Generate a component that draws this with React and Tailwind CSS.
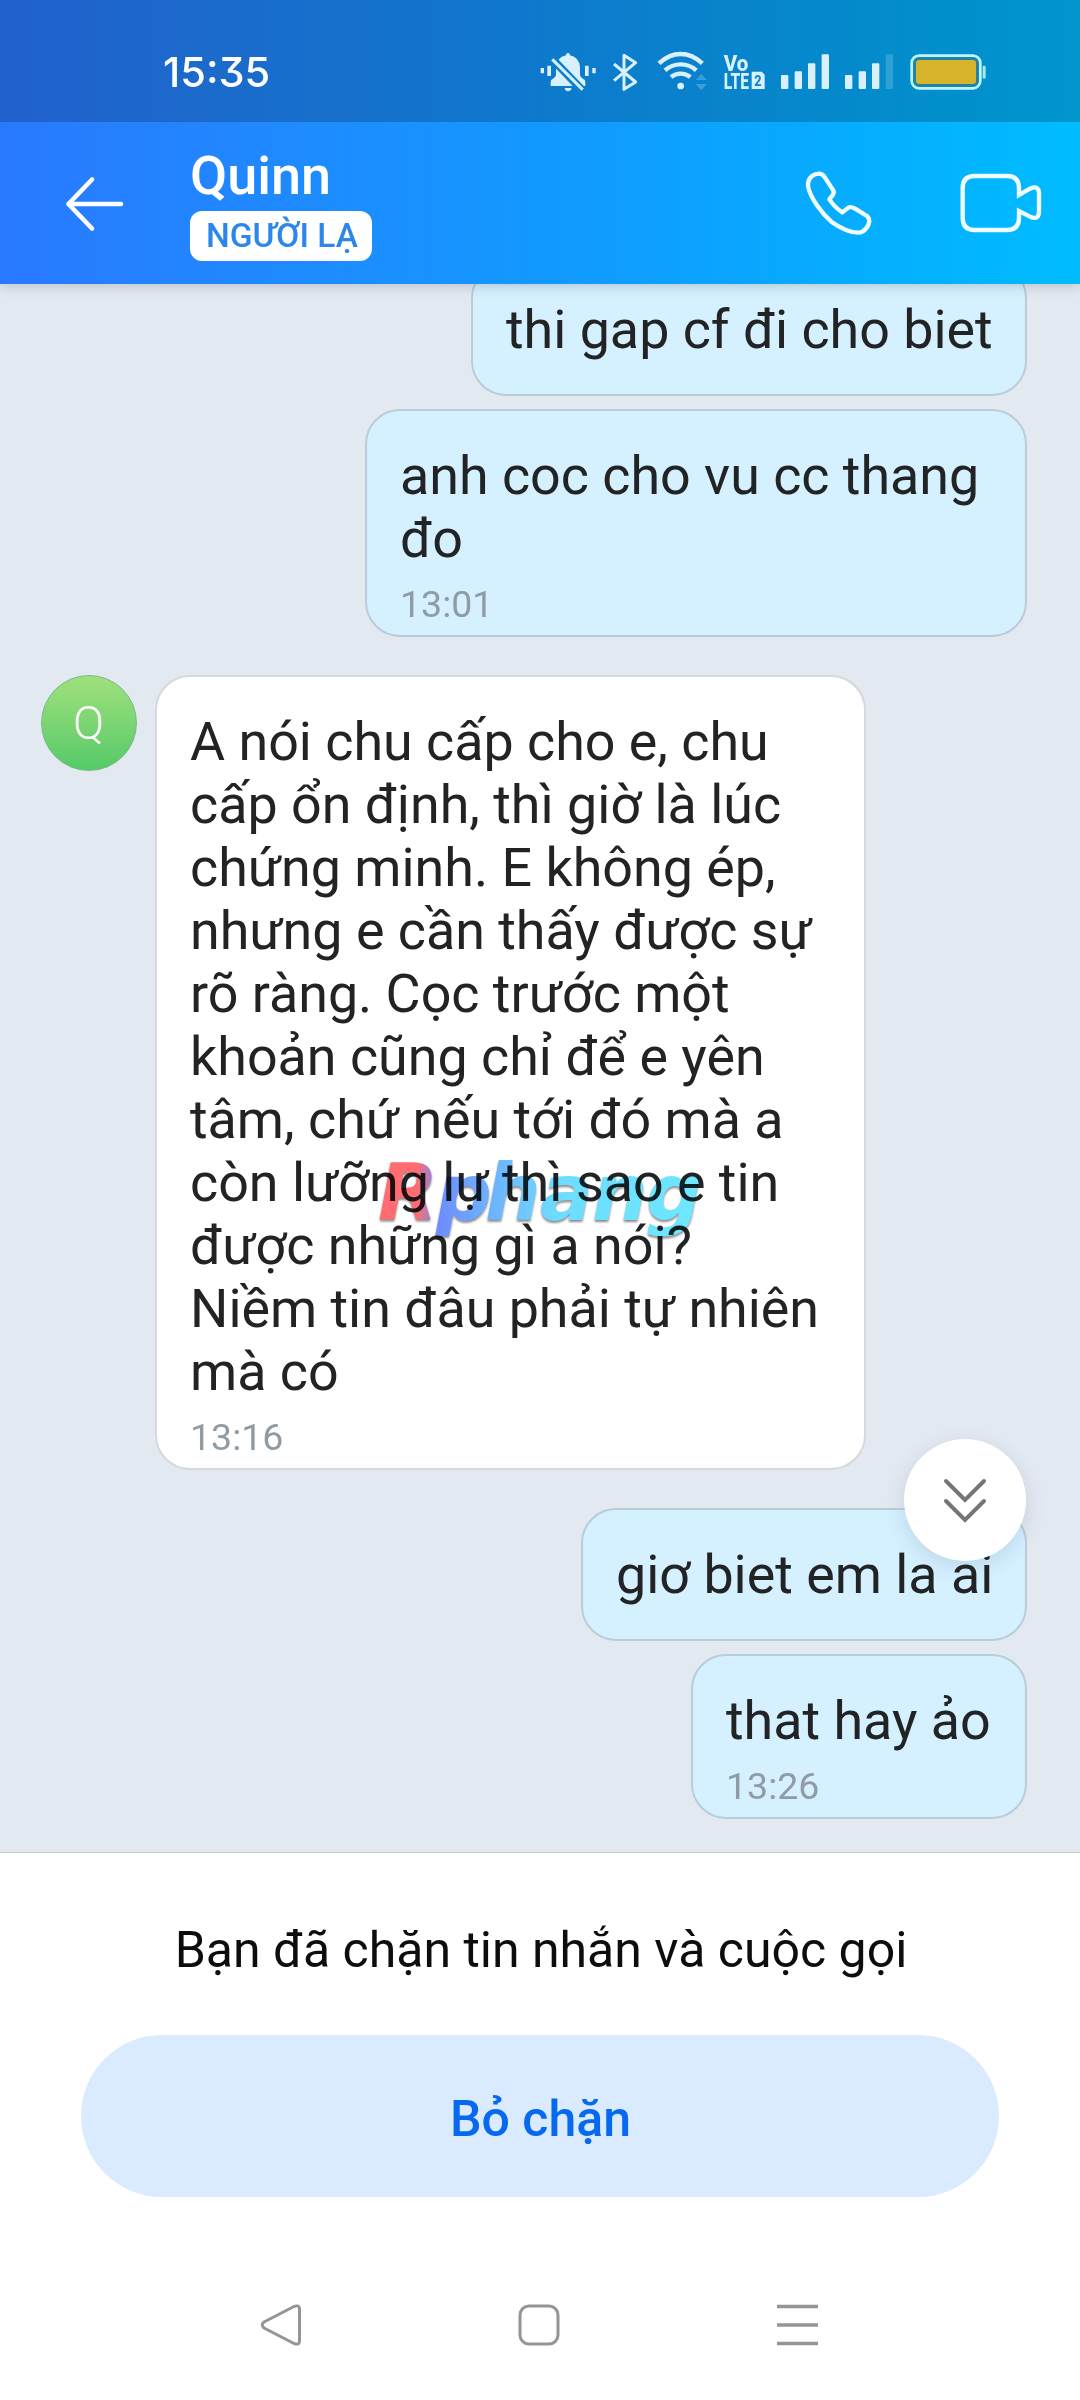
import clsx from 'clsx';

const messages = [
  { id: 1, mine: true, lines: ['thi gap cf đi cho biet'], width: 'w-[556px]' },
  { id: 2, mine: true, lines: ['anh coc cho vu cc thang', 'đo'], time: '13:01', width: 'w-[662px]' },
  {
    id: 3,
    mine: false,
    lines: [
      'A nói chu cấp cho e, chu',
      'cấp ổn định, thì giờ là lúc',
      'chứng minh. E không ép,',
      'nhưng e cần thấy được sự',
      'rõ ràng. Cọc trước một',
      'khoản cũng chỉ để e yên',
      'tâm, chứ nếu tới đó mà a',
      'còn lưỡng lự thì sao e tin',
      'được những gì a nói?',
      'Niềm tin đâu phải tự nhiên',
      'mà có',
    ],
    time: '13:16',
    width: 'w-[711px]',
  },
  { id: 4, mine: true, lines: ['giơ biet em la ai'], width: 'w-[446px]' },
  { id: 5, mine: true, lines: ['that hay ảo'], time: '13:26', width: 'w-[336px]' },
];

function StatusIcons() {
  return (
    <div className="flex items-start text-[#d9f0ff]">
      {/* Muted bell */}
      <svg className="h-[43.33px] w-[56.67px]" viewBox="60 60 170 130" fill="currentColor">
        <path d="M92 168V155Q92 149 98 147Q107 143 108 134V112Q110 82 138 76Q138 69 144 69Q150 69 150 76Q178 82 180 112V134Q181 143 190 147Q196 149 196 155V168Z" />
        <path d="M134 174H155Q152 184 144 184Q136 184 134 174Z" />
        <path d="M92 82L190 184" stroke="#0e7fcb" strokeWidth="24" />
        <path d="M97 88L188 179" stroke="currentColor" strokeWidth="9" />
        <path d="M62 114h10v16h-10zM82 107h11v31h-11zM195 107h11v31h-11zM217 114h10v16h-10z" />
      </svg>
      {/* Bluetooth */}
      <svg className="ml-[15px] h-[43.33px] w-[26px]" viewBox="275 60 78 130" fill="none" stroke="currentColor" strokeWidth="9">
        <path d="M281 102L346 156L311 178V76L346 98L281 152" strokeLinejoin="round" />
      </svg>
      {/* Wifi */}
      <svg className="ml-[19.67px] h-[43.33px] w-[52px]" viewBox="412 60 156 130" fill="none" stroke="currentColor" strokeWidth="13">
        <path d="M418 100Q448 72 483 72Q518 72 548 100" />
        <path d="M436 121Q456 103 483 103Q510 103 530 121" />
        <path d="M454 141Q467 131 483 131Q499 131 512 141" />
        <circle cx="483" cy="168" r="10" fill="currentColor" stroke="none" />
        <path d="M528 150L545 131L562 150ZM528 162L545 181L562 162Z" fill="currentColor" stroke="none" opacity="0.25" />
      </svg>
      {/* VoLTE, second SIM */}
      <svg className="ml-[13.33px] h-[43.33px] w-[42.67px] font-[Roboto,sans-serif]" viewBox="608 60 128 130" fill="currentColor">
        <text x="610" y="122" fontSize="64" fontWeight="800" textLength="74" lengthAdjust="spacingAndGlyphs">Vo</text>
        <text x="610" y="177" fontSize="64" fontWeight="800" textLength="76" lengthAdjust="spacingAndGlyphs">LTE</text>
        <path d="M694 125H724L733 134V177H694Z" />
        <text x="702" y="168" fontSize="45" fontWeight="800" fill="#0a84cb" textLength="22" lengthAdjust="spacingAndGlyphs">2</text>
      </svg>
      {/* Signal strength */}
      <svg className="ml-[15.67px] h-[43.33px] w-[48.33px]" viewBox="63 60 145 130" fill="currentColor">
        <rect x="63" y="135" width="22" height="42" rx="3" />
        <rect x="104" y="124" width="22" height="53" rx="3" />
        <rect x="144" y="100" width="22" height="77" rx="3" />
        <rect x="185" y="73" width="22" height="104" rx="3" />
      </svg>
      <svg className="ml-[15.67px] h-[43.33px] w-[48.33px]" viewBox="255 60 145 130" fill="currentColor">
        <rect x="255" y="135" width="22" height="42" rx="3" />
        <rect x="296" y="124" width="22" height="53" rx="3" />
        <rect x="336" y="100" width="22" height="77" rx="3" />
        <rect x="377" y="73" width="22" height="104" rx="3" opacity="0.2" />
      </svg>
      {/* Battery */}
      <svg className="ml-[16.67px] h-[43.33px] w-[76.67px]" viewBox="450 60 230 130">
        <rect x="455" y="77" width="206" height="98" rx="22" fill="#1c86a4" stroke="#c2f3fd" strokeWidth="8" />
        <rect x="468" y="90" width="180" height="72" rx="10" fill="#d8b32c" />
        <rect x="668" y="107" width="9" height="39" rx="4" fill="#a5e8f8" />
      </svg>
    </div>
  );
}

function Header() {
  return (
    <header className="relative z-10 h-[284px] bg-linear-to-r from-[#2979ff] via-[#1298ff] to-[#00bcff] shadow-[0_2px_12px_rgba(0,0,0,0.18)]">
      <div className="flex h-[122px] items-start justify-between bg-black/20 pt-[50px] pr-[93.3px] pl-[163px]">
        <span className="font-[Inter,sans-serif] text-[41.5px] leading-[45px] font-medium text-white [font-feature-settings:'cv09']">
          15:35
        </span>
        <StatusIcons />
      </div>
      <div className="flex h-[162px] items-start pl-[64px]">
        <svg className="mt-[52px] h-[60px] w-[62px]" viewBox="0 0 62 60" fill="none" stroke="white" strokeWidth="4.6" strokeLinecap="round" strokeLinejoin="round">
          <path d="M28 5.500L4.500 30L28 54.500M4.500 30H57" />
        </svg>
        <div className="ml-[64px] flex flex-1 flex-col items-start pt-[22px]">
          <h1 className="text-[54px] leading-[64px] font-medium text-white">Quinn</h1>
          <span className="mt-[3px] flex h-[50px] w-[182px] items-center justify-center rounded-xl bg-white pt-px pl-[2px] text-[33.5px] font-medium text-[#2d87ea]">
            NGƯỜI LẠ
          </span>
        </div>
        <svg className="mt-[47px] h-[68px] w-[70px]" viewBox="133 117 210 204" fill="none" stroke="#effdff" strokeWidth="13" strokeLinejoin="round">
          <path d="M157 138Q144 149 145 168C151 205 190 253 215 275C240 293 268 307 297 308C313 307 328 290 329 272Q329 264 322 258L290 238Q272 226 262 236L248 247Q225 232 209 208L220 194Q225 186 219 178L196 143Q189 131 178 131Q166 131 157 138Z" />
        </svg>
        <svg className="mt-[47px] mr-[37px] ml-[85px] h-[68px] w-[84px]" viewBox="596 117 252 204" fill="none" stroke="#effdff" strokeWidth="13">
          <path d="M776 195V174Q776 138 740 138H643Q607 138 607 174V264Q607 300 643 300H740Q776 300 776 264V243L809 260Q836 272 836 244V190Q836 164 809 176Z" />
        </svg>
      </div>
    </header>
  );
}

// Brand mark stamped across the long message
function Watermark() {
  return (
    <svg className="absolute top-[453px] left-[218px] h-[120px] w-[360px] mix-blend-multiply" viewBox="0 0 360 120">
      <defs>
        <linearGradient id="brand" x1="0" y1="0" x2="1" y2="0">
          <stop offset="0" stopColor="#ff6d72" />
          <stop offset="0.12" stopColor="#ff6d72" />
          <stop offset="0.19" stopColor="#6d8dff" />
          <stop offset="0.3" stopColor="#6da8ff" />
          <stop offset="0.55" stopColor="#6edcff" />
          <stop offset="1" stopColor="#6ee8ff" />
        </linearGradient>
      </defs>
      <text
        x="3 61 110 165 217 271"
        y="90"
        fontFamily="DejaVu Sans"
        fontSize="78"
        fontWeight="700"
        fontStyle="oblique"
        fill="url(#brand)"
        className="drop-shadow-[0_2px_1px_rgba(60,60,60,0.6)]"
      >
        Rphang
      </text>
    </svg>
  );
}

function Message({ message }) {
  const { mine, lines, time, width } = message;

  return (
    <div className={clsx('flex items-start', mine ? 'justify-end' : 'my-[25px] gap-[18px]')}>
      {!mine && (
        <div className="flex size-24 items-center justify-center rounded-full border border-[#7bb98a] bg-linear-to-b from-[#9fe07e] to-[#53ca68] pr-px text-[46px] font-light text-white">
          Q
        </div>
      )}
      <div
        className={clsx(
          'relative rounded-[35px] border-2 pt-[33px] pl-[33px]',
          width,
          mine ? 'border-[#b9cdd9] bg-[#d5f0ff]' : 'border-[#d6d8db] bg-white',
          time ? 'pb-[9px]' : 'pb-[33px]'
        )}
      >
        {lines.map((line) => (
          <p key={line} className="text-[53.8px] leading-[63px] whitespace-nowrap text-[#212324]">
            {line}
          </p>
        ))}
        {time && <p className="mt-[12px] text-[37.5px] leading-[44px] text-[#8f9ba5]">{time}</p>}
        {!mine && <Watermark />}
      </div>
    </div>
  );
}

export default function App() {
  return (
    <div className="flex h-[2400px] w-[1080px] flex-col overflow-hidden bg-white font-[Roboto,sans-serif]">
      <Header />

      <main className="relative flex h-[1569px] flex-col justify-end gap-[13px] overflow-hidden border-b border-[#c5cbd2] bg-[#e2e9f1] pr-[53px] pb-[33px] pl-[41px]">
        {messages.map((message) => (
          <Message key={message.id} message={message} />
        ))}
        {/* Jump to latest */}
        <button className="absolute right-[54px] bottom-[291px] flex size-[122px] items-center justify-center rounded-full bg-white shadow-[0_6px_20px_rgba(60,90,120,0.16)]">
          <svg className="size-[50px]" viewBox="0 0 50 50" fill="none" stroke="#757575" strokeWidth="4" strokeLinecap="round">
            <path d="M6 6L25 25L44 6M6 26L25 45L44 26" />
          </svg>
        </button>
      </main>

      <section className="flex flex-col items-center pt-[67px]">
        <p className="pl-[2px] text-[50px] leading-[60px] text-[#0d0d0d]">Bạn đã chặn tin nhắn và cuộc gọi</p>
        <button className="mt-[55px] h-[162px] w-[918px] rounded-full bg-[#daeaff] pt-[6px] pl-px text-[50px] font-medium text-[#0768f0]">
          Bỏ chặn
        </button>
      </section>

      <nav className="mt-[107px] flex justify-between pr-[261px] pl-[260px] text-[#959595]">
        <svg className="h-[42px] w-[43px]" viewBox="0 0 43 42" fill="none" stroke="currentColor" strokeWidth="3" strokeLinejoin="round">
          <path d="M4 18L34 2.500Q39.500 0.500 39.500 5V37Q39.500 41.500 34 39.500L4 24Q0.500 21 4 18Z" />
        </svg>
        <svg className="h-[42px] w-[43px]" viewBox="0 0 43 42" fill="none" stroke="currentColor" strokeWidth="3">
          <rect x="2" y="2" width="38" height="38" rx="9" />
        </svg>
        <svg className="h-[42px] w-[43px]" viewBox="0 0 43 42" stroke="currentColor" strokeWidth="3.500">
          <path d="M1 2.500H42M1 21H42M1 39.500H42" />
        </svg>
      </nav>
    </div>
  );
}
